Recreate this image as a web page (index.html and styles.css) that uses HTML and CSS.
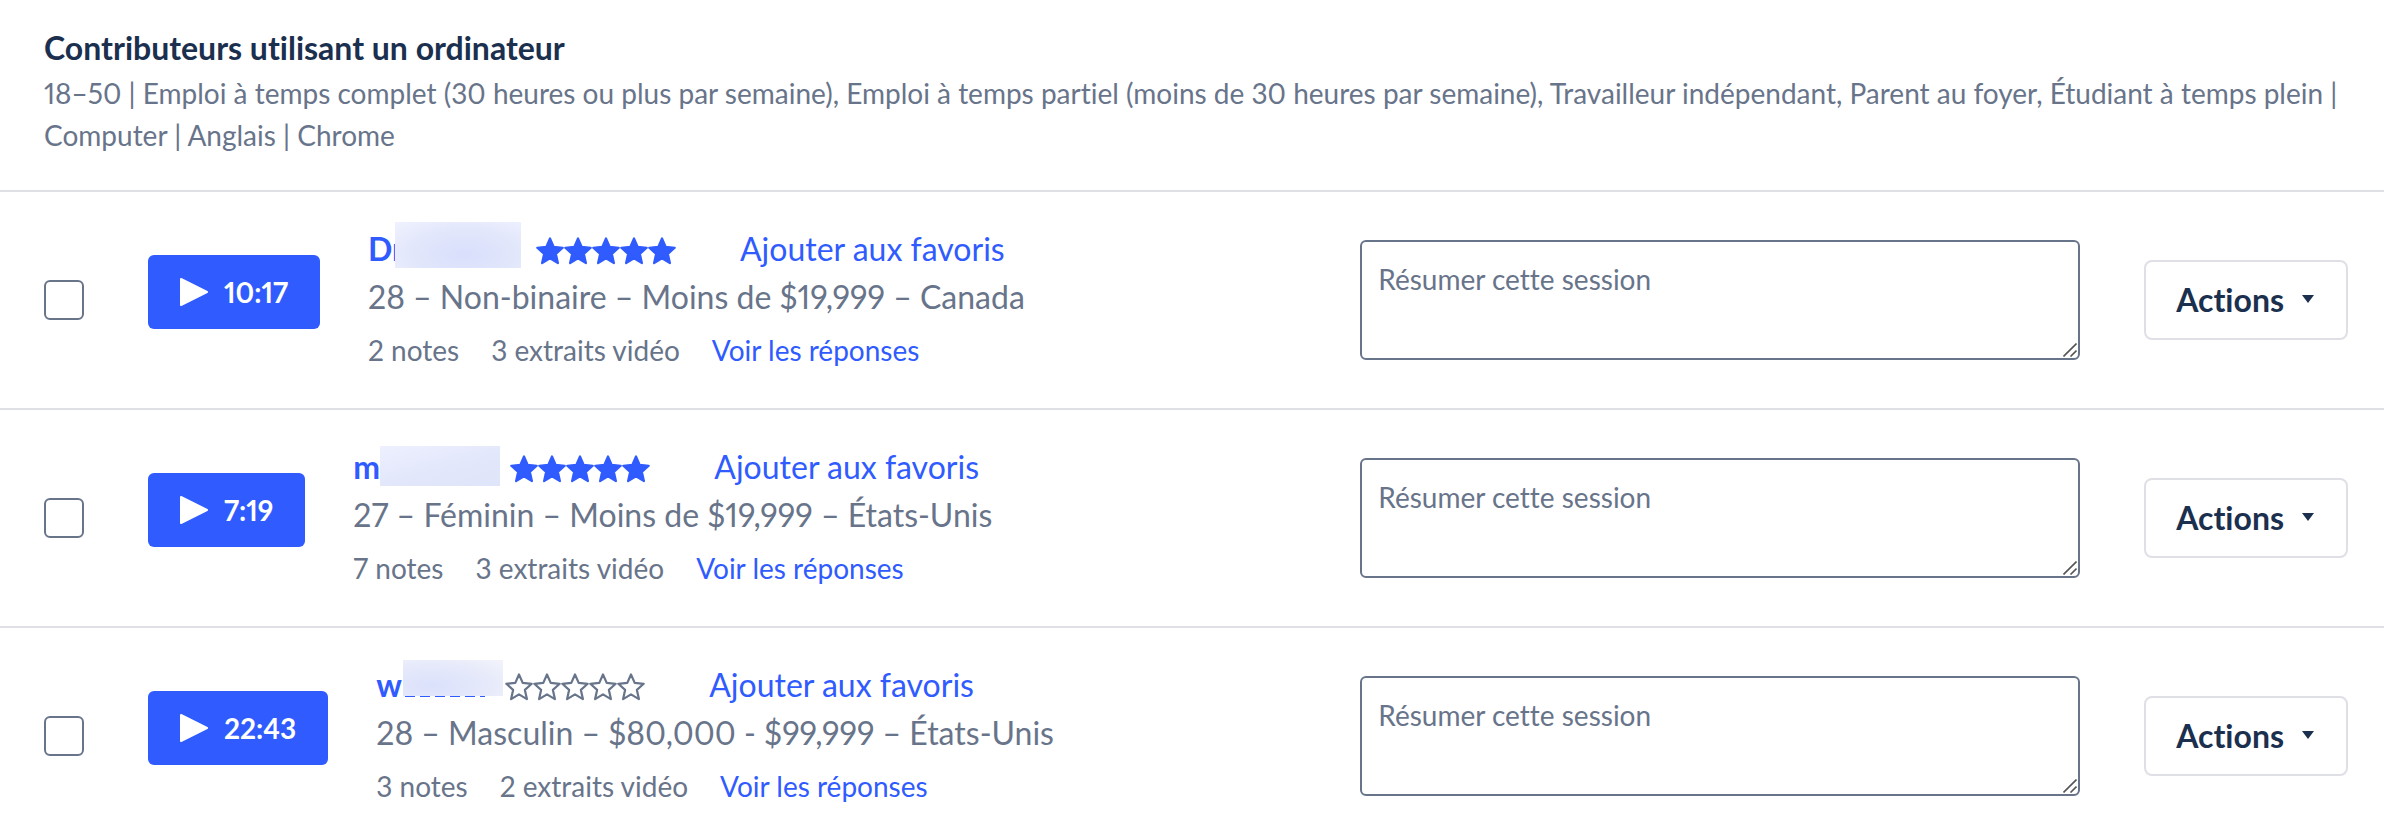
FILE: index.html
```
<!DOCTYPE html>
<html lang="fr">
<head>
    <meta charset="UTF-8">
    <meta name="viewport" content="width=device-width, initial-scale=1.0">
    <title>Contributeurs</title>
    <link rel="stylesheet" href="styles.css">
</head>
<body>
    <svg class="sprite" aria-hidden="true">
        <symbol id="star" viewBox="0 0 28 28">
            <path d="M14 1.5l3.7 8.4 9 .9-6.8 6.1 2 9.2-7.9-4.7-7.9 4.7 2-9.2-6.8-6.1 9-.9z" stroke-width="2.2" stroke-linejoin="round"/>
        </symbol>
        <symbol id="play" viewBox="0 0 28 28">
            <path d="M1 1l26 13L1 27z" fill="currentColor" stroke="currentColor" stroke-width="2" stroke-linejoin="round"/>
        </symbol>
        <symbol id="grip" viewBox="0 0 14 14">
            <path d="M0.5 13.5l13-13M7.5 13.5l6-6" stroke="#555" stroke-width="1.6"/>
        </symbol>
    </svg>

    <header class="group-header">
        <h2 class="group-title">Contributeurs utilisant un ordinateur</h2>
        <p class="group-details">18–50 | Emploi à temps complet (30 heures ou plus par semaine), Emploi à temps partiel (moins de 30 heures par semaine), Travailleur indépendant, Parent au foyer, Étudiant à temps plein | Computer | Anglais | Chrome</p>
    </header>

    <main>
        <section class="session">
            <input class="check" type="checkbox" aria-label="Sélectionner la session 1">
            <button class="play" type="button"><svg class="play-icon"><use href="#play"/></svg>10:17</button>
            <div class="info">
                <div class="info-top">
                    <a class="name name-a" href="#">Dr<span class="mask"></span></a>
                    <span class="stars" role="img" aria-label="5 sur 5">
                        <svg><use href="#star"/></svg><svg><use href="#star"/></svg><svg><use href="#star"/></svg><svg><use href="#star"/></svg><svg><use href="#star"/></svg>
                    </span>
                    <a class="favorite" href="#">Ajouter aux favoris</a>
                </div>
                <p class="profile">28 – Non-binaire – Moins de $19,999 – Canada</p>
                <div class="meta">
                    <span>2 notes</span>
                    <span>3 extraits vidéo</span>
                    <a href="#">Voir les réponses</a>
                </div>
            </div>
            <div class="summary">
                <textarea aria-label="Résumer cette session" placeholder="Résumer cette session"></textarea>
                <svg class="grip"><use href="#grip"/></svg>
            </div>
            <button class="actions" type="button">Actions<span class="caret"></span></button>
        </section>

        <section class="session">
            <input class="check" type="checkbox" aria-label="Sélectionner la session 2">
            <button class="play" type="button"><svg class="play-icon"><use href="#play"/></svg>7:19</button>
            <div class="info">
                <div class="info-top">
                    <a class="name name-b" href="#">m<span class="mask"></span></a>
                    <span class="stars" role="img" aria-label="5 sur 5">
                        <svg><use href="#star"/></svg><svg><use href="#star"/></svg><svg><use href="#star"/></svg><svg><use href="#star"/></svg><svg><use href="#star"/></svg>
                    </span>
                    <a class="favorite" href="#">Ajouter aux favoris</a>
                </div>
                <p class="profile">27 – Féminin – Moins de $19,999 – États-Unis</p>
                <div class="meta">
                    <span>7 notes</span>
                    <span>3 extraits vidéo</span>
                    <a href="#">Voir les réponses</a>
                </div>
            </div>
            <div class="summary">
                <textarea aria-label="Résumer cette session" placeholder="Résumer cette session"></textarea>
                <svg class="grip"><use href="#grip"/></svg>
            </div>
            <button class="actions" type="button">Actions<span class="caret"></span></button>
        </section>

        <section class="session">
            <input class="check" type="checkbox" aria-label="Sélectionner la session 3">
            <button class="play" type="button"><svg class="play-icon"><use href="#play"/></svg>22:43</button>
            <div class="info">
                <div class="info-top">
                    <a class="name name-c" href="#">w<span class="mask"></span></a>
                    <span class="stars stars-empty" role="img" aria-label="0 sur 5">
                        <svg><use href="#star"/></svg><svg><use href="#star"/></svg><svg><use href="#star"/></svg><svg><use href="#star"/></svg><svg><use href="#star"/></svg>
                    </span>
                    <a class="favorite" href="#">Ajouter aux favoris</a>
                </div>
                <p class="profile">28 – Masculin – $80,000 - $99,999 – États-Unis</p>
                <div class="meta">
                    <span>3 notes</span>
                    <span>2 extraits vidéo</span>
                    <a href="#">Voir les réponses</a>
                </div>
            </div>
            <div class="summary">
                <textarea aria-label="Résumer cette session" placeholder="Résumer cette session"></textarea>
                <svg class="grip"><use href="#grip"/></svg>
            </div>
            <button class="actions" type="button">Actions<span class="caret"></span></button>
        </section>
    </main>
</body>
</html>
```
FILE: styles.css
```
* {
    box-sizing: border-box;
}

body {
    font-family: Lato, "Open Sans", sans-serif;
    font-size: 28px;
    line-height: 42px;
    font-variant-ligatures: none;
    font-variant-numeric: proportional-nums;
    color: #68748a;
    background-color: #fff;
    margin: 0;
}

h2, p {
    margin: 0;
}

a {
    color: #2f5bff;
    text-decoration: none;
}

button, textarea {
    font-family: inherit;
    font-variant-ligatures: inherit;
    font-variant-numeric: inherit;
}

.sprite {
    display: none;
}

.group-header {
    padding: 26px 36px 34px 44px;
}

.group-title {
    margin-bottom: 2px;
    font-size: 32px;
    line-height: 44px;
    font-weight: 700;
    color: #1b2f4e;
}

.session {
    display: flex;
    align-items: center;
    padding: 33px 36px 33px 44px;
    border-top: 2px solid #dfdfe6;
}

.session:last-child {
    padding-bottom: 28px;
}

.check {
    appearance: none;
    flex: none;
    width: 40px;
    height: 40px;
    margin: 0 64px 0 0;
    border: 2px solid #68748a;
    border-radius: 6px;
    background-color: #fff;
}

.check:checked {
    background-color: #2f5bff;
}

.play {
    display: flex;
    flex: none;
    align-items: center;
    gap: 16px;
    height: 74px;
    padding: 0 32px;
    margin: 0 48px 16px 0;
    border: 0;
    border-radius: 6px;
    background-color: #2f5bff;
    color: #fff;
    font-size: 28px;
    font-weight: 700;
}

.play-icon {
    width: 28px;
    height: 28px;
}

.info {
    flex: 1;
    margin-bottom: 4px;
}

.info-top {
    display: flex;
    align-items: center;
    font-size: 32px;
    line-height: 48px;
}

.name {
    position: relative;
    font-weight: 700;
}

.name-a {
    width: 168px;
}

.name-b {
    width: 157px;
}

.name-c {
    width: 129px;
}

/* hides the end of the user name */
.mask {
    position: absolute;
    left: 27px;
}

.name-a .mask {
    top: -3px;
    width: 126px;
    height: 46px;
    background: radial-gradient(ellipse at 55% 70%, #d9dffc, #e2e7fb 55%, #f0f2fe);
}

.name-b .mask {
    top: 3px;
    width: 120px;
    height: 40px;
    background: linear-gradient(165deg, #eef0fe, #e2e7fb 55%, #dfe5fa);
}

.name-c .mask {
    top: -1px;
    width: 100px;
    height: 36px;
    background: radial-gradient(ellipse at 30% 70%, #dbe1fc, #e7eafa 60%, #f3f4fa);
}

.name-c .mask::after {
    content: "";
    position: absolute;
    top: 100%;
    left: 2px;
    width: 80px;
    height: 1px;
    background: repeating-linear-gradient(90deg, #2f5bff 0 10px, transparent 10px 15px);
}

.stars {
    display: flex;
    margin: 4px 64px 0 0;
}

.stars svg {
    width: 28px;
    height: 28px;
    fill: #2f5bff;
    stroke: #2f5bff;
}

.stars-empty svg {
    fill: none;
    stroke: #68748a;
}

.profile {
    font-size: 32px;
    line-height: 48px;
}

.meta {
    display: flex;
    gap: 32px;
    margin-top: 8px;
}

.summary {
    position: relative;
    flex: 0 1 720px;
    margin-right: 64px;
}

.summary textarea {
    display: block;
    width: 100%;
    height: 120px;
    padding: 16px;
    border: 2px solid #68748a;
    border-radius: 6px;
    font-size: 28px;
    line-height: 42px;
    color: #1b2f4e;
    resize: none;
}

.summary textarea::placeholder {
    color: #68748a;
}

.grip {
    position: absolute;
    right: 3px;
    bottom: 3px;
    width: 14px;
    height: 14px;
    pointer-events: none;
}

.actions {
    display: flex;
    flex: none;
    align-items: center;
    gap: 18px;
    height: 80px;
    padding: 0 32px 2px 30px;
    border: 2px solid #dfdfe6;
    border-radius: 8px;
    background-color: #fff;
    color: #1b2f4e;
    font-size: 32px;
    font-weight: 700;
}

.caret {
    border: 6px solid transparent;
    border-top: 8px solid #1b2f4e;
    border-bottom: 0;
}
```
